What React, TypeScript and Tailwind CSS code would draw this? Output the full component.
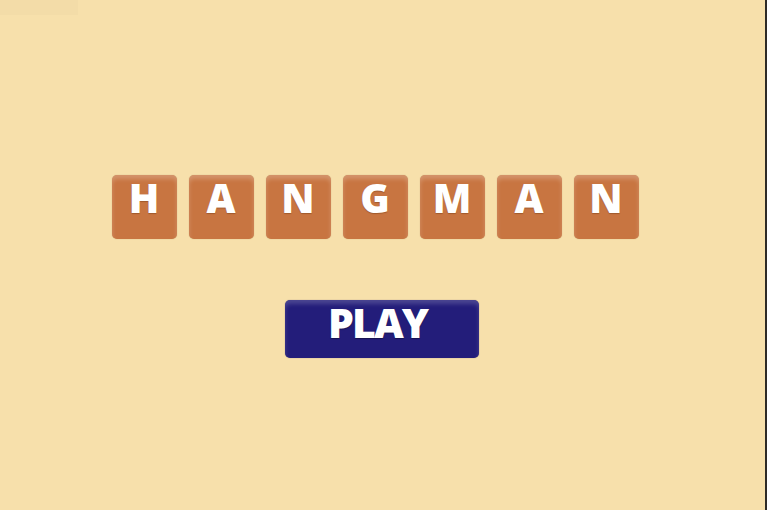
const letters = ["H", "A", "N", "G", "M", "A", "N"];

function Tile({ letter }: { letter: string }) {
  return (
    <div className="flex h-[64px] w-[65px] justify-center rounded-[5px] bg-[#c87541] pt-[3px] shadow-[inset_0_4px_4px_rgba(255,255,255,0.22),0_0_1px_rgba(120,70,30,0.4)]">
      <span className="font-['Open_Sans',sans-serif] text-[40px] font-extrabold leading-none text-white [text-shadow:0_1px_1px_rgba(90,40,10,0.35)]">
        {letter}
      </span>
    </div>
  );
}

export default function App() {
  return (
    <main className="h-[510px] w-full overflow-hidden border-r-2 border-[#2e2b26] bg-[#f7e0ab]">
      <div className="h-[15px] w-[78px] bg-[#f3dca8]" />

      <div className="mt-[160px] flex justify-center gap-3 pr-[15px]">
        {letters.map((l, i) => (
          <Tile key={i} letter={l} />
        ))}
      </div>

      <div className="mt-[61px] flex justify-center pr-[1px]">
        <button className="flex h-[58px] w-[194px] justify-center rounded-[5px] bg-[#231d7a] pr-[9px] pt-[2px] shadow-[inset_0_4px_4px_rgba(255,255,255,0.18),0_0_1px_rgba(20,15,80,0.5)]">
          <span className="font-['Open_Sans',sans-serif] text-[41px] font-extrabold leading-none tracking-[-2px] text-white [text-shadow:0_1px_1px_rgba(0,0,0,0.35)]">
            PLAY
          </span>
        </button>
      </div>
    </main>
  );
}
